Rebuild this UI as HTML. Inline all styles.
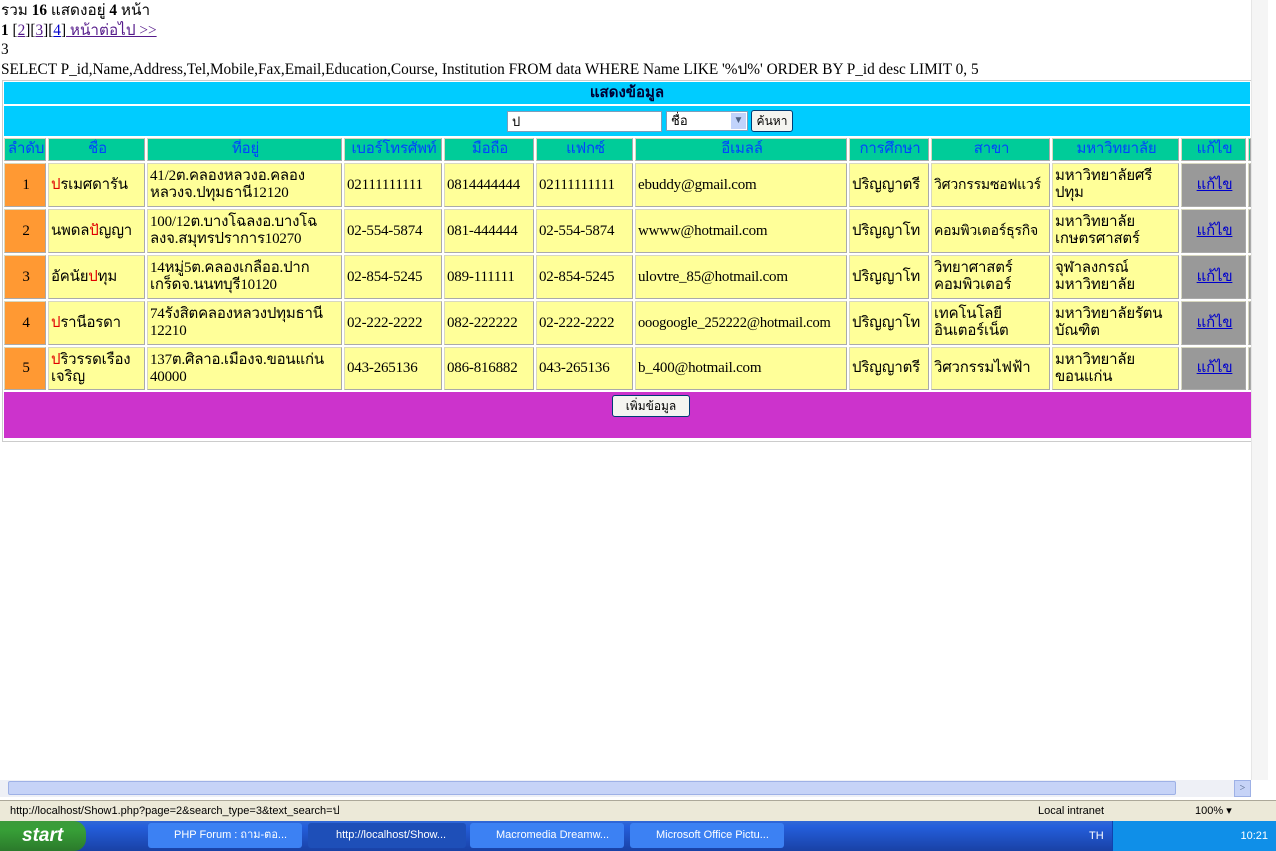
<!DOCTYPE html>
<html><head><meta charset="utf-8"><style>
*{margin:0;padding:0;box-sizing:border-box}
body{width:1276px;height:851px;position:relative;overflow:hidden;background:#fff;font-family:"Liberation Serif",serif;font-size:16px;color:#000}
.a{position:absolute}
.c{position:absolute;display:flex;align-items:center;padding-left:2px;border:1px solid #d8d8c0;border-right-color:#aaa;border-bottom-color:#aaa;overflow:hidden;font-size:15px;line-height:17px;white-space:nowrap;letter-spacing:-0.2px}
.h{background:#00cc99;color:#0044ff;justify-content:center;top:138px;height:23px;font-size:15px}
.y{background:#ffff99}
.o{background:#ff9933;justify-content:center}
.g{background:#999;justify-content:center}
.g span{color:#0000cc;text-decoration:underline}
.r{color:#e00000}
a{color:#551a8b}
</style></head><body>
<div class="a" style="left:1px;top:1px;line-height:19.5px;font-size:15.3px">รวม <b>16</b> แสดงอยู่ <b>4</b> หน้า<br><b>1</b> [<a href="#">2</a>][<a href="#">3</a>][<a href="#" style="color:#00c">4</a>]<a href="#"> หน้าต่อไป &gt;&gt;</a><br>3<br>SELECT P_id,Name,Address,Tel,Mobile,Fax,Email,Education,Course, Institution FROM data WHERE Name LIKE '%ป%' ORDER BY P_id desc LIMIT 0, 5</div>
<div class="a" style="left:2px;top:80px;width:1250px;height:362px;border:1px solid #ccc;background:#fff"></div>
<div class="a" style="left:4px;top:82px;width:1246px;height:22px;background:#00ccff;text-align:center;font-weight:bold;color:#003;font-size:15px;line-height:22px">แสดงข้อมูล</div>
<div class="a" style="left:4px;top:106px;width:1246px;height:30px;background:#00ccff"></div>
<div class="a" style="left:507px;top:111px;width:155px;height:21px;background:#fff;border:1px solid #7f9db9;font-size:13px;padding-left:4px;line-height:19px">ป</div>
<div class="a" style="left:666px;top:111px;width:82px;height:20px;background:#fff;border:1px solid #7f9db9;font-size:13px;padding-left:4px;line-height:18px">ชื่อ<span style="position:absolute;right:1px;top:1px;width:15px;height:16px;background:#c1d3fb;color:#4d6185;font-size:10px;text-align:center;line-height:16px">▼</span></div>
<div class="a" style="left:751px;top:110px;width:42px;height:22px;background:#f4f4f0;border:1px solid #003c74;border-radius:3px;font-size:12px;text-align:center;line-height:20px">ค้นหา</div>

<div class="c h" style="left:4px;width:42px">ลำดับ</div>
<div class="c h" style="left:48px;width:97px">ชื่อ</div>
<div class="c h" style="left:147px;width:195px">ที่อยู่</div>
<div class="c h" style="left:344px;width:98px">เบอร์โทรศัพท์</div>
<div class="c h" style="left:444px;width:90px">มือถือ</div>
<div class="c h" style="left:536px;width:97px">แฟกซ์</div>
<div class="c h" style="left:635px;width:212px">อีเมลล์</div>
<div class="c h" style="left:849px;width:80px">การศึกษา</div>
<div class="c h" style="left:931px;width:119px">สาขา</div>
<div class="c h" style="left:1052px;width:127px">มหาวิทยาลัย</div>
<div class="c h" style="left:1181px;width:65px">แก้ไข</div>
<div class="c h" style="left:1248px;width:3px;padding:0"></div>

<div style="position:absolute;left:0;top:163px">
<div class="c o" style="left:4px;width:42px;top:0;height:44px">1</div>
<div class="c y" style="left:48px;width:97px;top:0;height:44px"><span><span class="r">ป</span>รเมศดารัน</span></div>
<div class="c y" style="left:147px;width:195px;top:0;height:44px">41/2ต.คลองหลวงอ.คลอง<br>หลวงจ.ปทุมธานี12120</div>
<div class="c y" style="left:344px;width:98px;top:0;height:44px">02111111111</div>
<div class="c y" style="left:444px;width:90px;top:0;height:44px">0814444444</div>
<div class="c y" style="left:536px;width:97px;top:0;height:44px">02111111111</div>
<div class="c y" style="left:635px;width:212px;top:0;height:44px">ebuddy@gmail.com</div>
<div class="c y" style="left:849px;width:80px;top:0;height:44px">ปริญญาตรี</div>
<div class="c y" style="left:931px;width:119px;top:0;height:44px;font-size:14px">วิศวกรรมซอฟแวร์</div>
<div class="c y" style="left:1052px;width:127px;top:0;height:44px">มหาวิทยาลัยศรี<br>ปทุม</div>
<div class="c g" style="left:1181px;width:65px;top:0;height:44px"><span>แก้ไข</span></div>
<div class="c g" style="left:1248px;width:3px;top:0;height:44px;padding:0"></div>
</div>
<div style="position:absolute;left:0;top:209px">
<div class="c o" style="left:4px;width:42px;top:0;height:44px">2</div>
<div class="c y" style="left:48px;width:97px;top:0;height:44px"><span>นพดล<span class="r">ป</span>ัญญา</span></div>
<div class="c y" style="left:147px;width:195px;top:0;height:44px">100/12ต.บางโฉลงอ.บางโฉ<br>ลงจ.สมุทรปราการ10270</div>
<div class="c y" style="left:344px;width:98px;top:0;height:44px">02-554-5874</div>
<div class="c y" style="left:444px;width:90px;top:0;height:44px">081-444444</div>
<div class="c y" style="left:536px;width:97px;top:0;height:44px">02-554-5874</div>
<div class="c y" style="left:635px;width:212px;top:0;height:44px">wwww@hotmail.com</div>
<div class="c y" style="left:849px;width:80px;top:0;height:44px">ปริญญาโท</div>
<div class="c y" style="left:931px;width:119px;top:0;height:44px;font-size:14px">คอมพิวเตอร์ธุรกิจ</div>
<div class="c y" style="left:1052px;width:127px;top:0;height:44px">มหาวิทยาลัย<br>เกษตรศาสตร์</div>
<div class="c g" style="left:1181px;width:65px;top:0;height:44px"><span>แก้ไข</span></div>
<div class="c g" style="left:1248px;width:3px;top:0;height:44px;padding:0"></div>
</div>
<div style="position:absolute;left:0;top:255px">
<div class="c o" style="left:4px;width:42px;top:0;height:44px">3</div>
<div class="c y" style="left:48px;width:97px;top:0;height:44px"><span>อัคนัย<span class="r">ป</span>ทุม</span></div>
<div class="c y" style="left:147px;width:195px;top:0;height:44px">14หมู่5ต.คลองเกลืออ.ปาก<br>เกร็ดจ.นนทบุรี10120</div>
<div class="c y" style="left:344px;width:98px;top:0;height:44px">02-854-5245</div>
<div class="c y" style="left:444px;width:90px;top:0;height:44px">089-111111</div>
<div class="c y" style="left:536px;width:97px;top:0;height:44px">02-854-5245</div>
<div class="c y" style="left:635px;width:212px;top:0;height:44px">ulovtre_85@hotmail.com</div>
<div class="c y" style="left:849px;width:80px;top:0;height:44px">ปริญญาโท</div>
<div class="c y" style="left:931px;width:119px;top:0;height:44px">วิทยาศาสตร์<br>คอมพิวเตอร์</div>
<div class="c y" style="left:1052px;width:127px;top:0;height:44px">จุฬาลงกรณ์<br>มหาวิทยาลัย</div>
<div class="c g" style="left:1181px;width:65px;top:0;height:44px"><span>แก้ไข</span></div>
<div class="c g" style="left:1248px;width:3px;top:0;height:44px;padding:0"></div>
</div>
<div style="position:absolute;left:0;top:301px">
<div class="c o" style="left:4px;width:42px;top:0;height:44px">4</div>
<div class="c y" style="left:48px;width:97px;top:0;height:44px"><span><span class="r">ป</span>รานีอรดา</span></div>
<div class="c y" style="left:147px;width:195px;top:0;height:44px">74รังสิตคลองหลวงปทุมธานี<br>12210</div>
<div class="c y" style="left:344px;width:98px;top:0;height:44px">02-222-2222</div>
<div class="c y" style="left:444px;width:90px;top:0;height:44px">082-222222</div>
<div class="c y" style="left:536px;width:97px;top:0;height:44px">02-222-2222</div>
<div class="c y" style="left:635px;width:212px;top:0;height:44px;font-size:14.5px">ooogoogle_252222@hotmail.com</div>
<div class="c y" style="left:849px;width:80px;top:0;height:44px">ปริญญาโท</div>
<div class="c y" style="left:931px;width:119px;top:0;height:44px">เทคโนโลยี<br>อินเตอร์เน็ต</div>
<div class="c y" style="left:1052px;width:127px;top:0;height:44px">มหาวิทยาลัยรัตน<br>บัณฑิต</div>
<div class="c g" style="left:1181px;width:65px;top:0;height:44px"><span>แก้ไข</span></div>
<div class="c g" style="left:1248px;width:3px;top:0;height:44px;padding:0"></div>
</div>
<div style="position:absolute;left:0;top:347px">
<div class="c o" style="left:4px;width:42px;top:0;height:43px">5</div>
<div class="c y" style="left:48px;width:97px;top:0;height:43px"><span><span class="r">ป</span>ริวรรดเรือง<br>เจริญ</span></div>
<div class="c y" style="left:147px;width:195px;top:0;height:43px">137ต.ศิลาอ.เมืองจ.ขอนแก่น<br>40000</div>
<div class="c y" style="left:344px;width:98px;top:0;height:43px">043-265136</div>
<div class="c y" style="left:444px;width:90px;top:0;height:43px">086-816882</div>
<div class="c y" style="left:536px;width:97px;top:0;height:43px">043-265136</div>
<div class="c y" style="left:635px;width:212px;top:0;height:43px">b_400@hotmail.com</div>
<div class="c y" style="left:849px;width:80px;top:0;height:43px">ปริญญาตรี</div>
<div class="c y" style="left:931px;width:119px;top:0;height:43px">วิศวกรรมไฟฟ้า</div>
<div class="c y" style="left:1052px;width:127px;top:0;height:43px">มหาวิทยาลัย<br>ขอนแก่น</div>
<div class="c g" style="left:1181px;width:65px;top:0;height:43px"><span>แก้ไข</span></div>
<div class="c g" style="left:1248px;width:3px;top:0;height:43px;padding:0"></div>
</div>
<div class="a" style="left:4px;top:392px;width:1247px;height:46px;background:#cc33cc"></div>
<div class="a" style="left:612px;top:395px;width:78px;height:22px;background:#f4f4f0;border:1px solid #003c74;border-radius:3px;font-size:12px;text-align:center;line-height:20px">เพิ่มข้อมูล</div>

<div class="a" style="left:1251px;top:0;width:17px;height:780px;background:#f5f5f5;border-left:1px solid #e6e6e6"></div>
<div class="a" style="left:1268px;top:0;width:8px;height:800px;background:#fff"></div>
<div class="a" style="left:0;top:780px;width:1251px;height:17px;background:#eef0f6"></div>
<div class="a" style="left:8px;top:781px;width:1168px;height:14px;background:#c6d3f7;border:1px solid #9eb1e6;border-radius:2px"></div>
<div class="a" style="left:1234px;top:780px;width:17px;height:17px;background:#c6d3f7;border:1px solid #9eb1e6;font-size:10px;text-align:center;line-height:15px;color:#4d6185">&gt;</div>
<div class="a" style="left:0;top:800px;width:1276px;height:21px;background:#ece9d8;border-top:1px solid #aca899;font-family:'Liberation Sans',sans-serif;font-size:11px;line-height:20px">
<span style="position:absolute;left:10px">http://localhost/Show1.php?page=2&amp;search_type=3&amp;text_search=ป</span>
<span style="position:absolute;left:1038px">Local intranet</span>
<span style="position:absolute;left:1195px">100% ▾</span></div>
<div class="a" style="left:0;top:821px;width:1276px;height:30px;background:linear-gradient(#3168d5,#245edb 20%,#1941a5)"></div>
<div class="a" style="left:0;top:821px;width:86px;height:30px;background:linear-gradient(#3c9a3c,#379f37 30%,#2b7a2b);border-radius:0 12px 12px 0;color:#fff;font:italic bold 19px 'Liberation Sans',sans-serif;line-height:30px;padding-left:22px">start</div>
<div class="a" style="left:148px;top:823px;width:154px;height:25px;background:#3c81f3;border-radius:3px;color:#fff;font:11px 'Liberation Sans',sans-serif;line-height:25px;padding-left:26px">PHP Forum : ถาม-ตอ...</div>
<div class="a" style="left:308px;top:823px;width:158px;height:25px;background:#1e4fb8;border-radius:3px;color:#fff;font:11px 'Liberation Sans',sans-serif;line-height:25px;padding-left:28px">http://localhost/Show...</div>
<div class="a" style="left:470px;top:823px;width:154px;height:25px;background:#3c81f3;border-radius:3px;color:#fff;font:11px 'Liberation Sans',sans-serif;line-height:25px;padding-left:26px">Macromedia Dreamw...</div>
<div class="a" style="left:630px;top:823px;width:154px;height:25px;background:#3c81f3;border-radius:3px;color:#fff;font:11px 'Liberation Sans',sans-serif;line-height:25px;padding-left:26px">Microsoft Office Pictu...</div>
<div class="a" style="left:1112px;top:821px;width:164px;height:30px;background:#0f8fe8;border-left:1px solid #1042af;color:#fff;font:11px 'Liberation Sans',sans-serif;line-height:30px"><span style="position:absolute;left:-24px">TH</span><span style="position:absolute;right:8px">10:21</span></div>
</body></html>
